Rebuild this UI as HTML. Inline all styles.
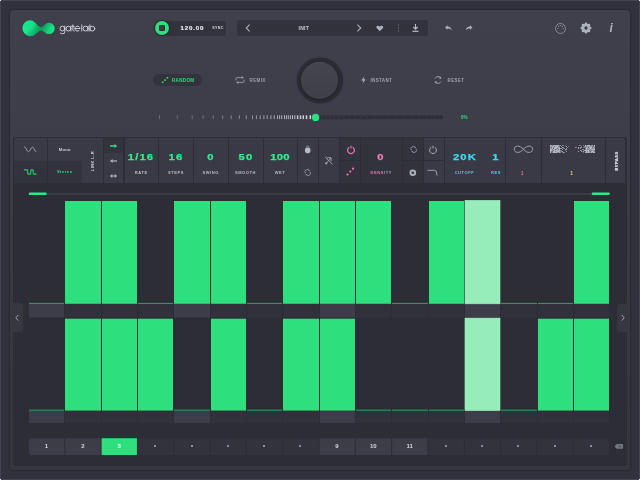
<!DOCTYPE html><html><head><meta charset="utf-8"><style>
*{margin:0;padding:0;box-sizing:border-box}
html,body{width:640px;height:480px;overflow:hidden;will-change:transform;background:#31323c;font-family:"Liberation Sans",sans-serif}
.a{position:absolute}
#panel{left:10px;top:10px;width:620px;height:460px;background:linear-gradient(#3f404c,#3c3d49 30%,#3a3b46 45%,#38383f 62%,#35363e);border-radius:4px;box-shadow:0 0 1px 0.5px rgba(20,20,28,0.3)}
.t{color:#c9cdd5;font-weight:bold;white-space:nowrap}
.cell{position:absolute;background:#393a45}
.dk{background:#32333d}
.lbl{position:absolute;font-size:4px;font-weight:bold;letter-spacing:0.6px;color:#b9bdc6;text-align:center;white-space:nowrap}
.val{position:absolute;font-size:9px;font-weight:bold;color:#31ec8c;-webkit-text-stroke:0.25px currentColor;text-align:center;white-space:nowrap;letter-spacing:0.9px;transform:scaleX(1.25)}
</style></head><body><div id="panel" class="a"></div>
<div class="a" style="left:0;top:0;width:640px;height:1px;background:#43444f"></div>
<div class="a" style="left:0;top:479px;width:640px;height:1px;background:#43444f"></div>
<div class="a" style="left:0;top:0;width:1px;height:480px;background:#43444f"></div>
<div class="a" style="left:639px;top:0;width:1px;height:480px;background:#43444f"></div>
<div class="a" style="left:0px;top:0px;width:1px;height:1px;background:#e8e8ec"></div>
<div class="a" style="left:639px;top:0px;width:1px;height:1px;background:#e8e8ec"></div>
<div class="a" style="left:0px;top:479px;width:1px;height:1px;background:#e8e8ec"></div>
<div class="a" style="left:639px;top:479px;width:1px;height:1px;background:#e8e8ec"></div>
<svg class="a" style="left:0;top:0" width="100" height="50" viewBox="0 0 100 50">
<defs><linearGradient id="lg" x1="22" x2="55" y1="0" y2="0" gradientUnits="userSpaceOnUse"><stop offset="0" stop-color="#18ee90"/><stop offset="0.35" stop-color="#16dc86"/><stop offset="0.52" stop-color="#10b56d"/><stop offset="0.62" stop-color="#0fae69"/><stop offset="0.8" stop-color="#16d480"/><stop offset="1" stop-color="#1ae88b"/></linearGradient>
<linearGradient id="lg2" x1="36" y1="23" x2="45" y2="33" gradientUnits="userSpaceOnUse"><stop offset="0" stop-color="#0a8f55" stop-opacity="0"/><stop offset="0.5" stop-color="#0a8f55" stop-opacity="0.55"/><stop offset="1" stop-color="#0a8f55" stop-opacity="0"/></linearGradient></defs>
<path id="lp" d="M30.4 20.2 A8 8 0 0 0 30.4 36.2 C34.8 36.2 37.6 31 40.6 30.4 C43.6 30.1 45.2 34.1 49 34.1 A5.65 5.65 0 0 0 49 22.8 C45.2 22.8 43.6 27.5 40.6 27.2 C37.6 26.8 34.8 20.2 30.4 20.2Z" fill="url(#lg)"/>
<path d="M30.4 20.2 A8 8 0 0 0 30.4 36.2 C34.8 36.2 37.6 31 40.6 30.4 C43.6 30.1 45.2 34.1 49 34.1 A5.65 5.65 0 0 0 49 22.8 C45.2 22.8 43.6 27.5 40.6 27.2 C37.6 26.8 34.8 20.2 30.4 20.2Z" fill="url(#lg2)"/>
<g stroke="#d3d5db" stroke-width="0.95" fill="none" stroke-linecap="round">
<circle cx="62.4" cy="28.6" r="2.4"/><path d="M64.8 26.2 V31.8 Q64.8 33.8 62.6 33.8 Q61.2 33.8 60.4 33.1"/>
<circle cx="68.45" cy="28.6" r="2.4"/><path d="M70.85 26.2 V31"/>
<path d="M72.9 24.9 V29.9 Q72.9 31 74.1 31 M71.7 26.3 H74.2"/>
<path d="M75 28.6 H79.95 A2.5 2.5 0 1 0 78.9 30.7"/>
<path d="M81.8 24.9 V31"/>
<circle cx="85.6" cy="28.6" r="2.45"/><path d="M88.05 26.2 V31"/>
<path d="M89.85 24.9 V31"/><circle cx="92.3" cy="28.6" r="2.45"/>
</g></svg>
<div class="a" style="left:160px;top:20.5px;width:66px;height:15px;background:#31323c;border-radius:3px"></div>
<div class="a" style="left:154.75px;top:20.85px;width:14.5px;height:14.5px;background:#2ddf7d;border-radius:50%;box-shadow:0 0 1px 1px rgba(30,25,40,0.6)"></div>
<div class="a" style="left:159.1px;top:25.4px;width:5.5px;height:5.7px;background:#3a3f42;border:1px solid #2a2b33;border-radius:1px"></div>
<div class="a t" style="left:180.5px;top:24.3px;font-size:6.1px;letter-spacing:0.85px;color:#e6e8ec;-webkit-text-stroke:0.2px #e6e8ec">120.00</div>
<div class="a t" style="left:212.3px;top:25.6px;font-size:3.6px;letter-spacing:0.35px;color:#d5d8de">SYNC</div>
<div class="a" style="left:236.5px;top:20px;width:191px;height:16px;background:#31323c;border-radius:3px"></div>
<svg class="a" style="left:244px;top:23px" width="8" height="10"><path d="M5.6 1.6 L2.2 5 L5.6 8.4" stroke="#a9adb6" stroke-width="1.1" fill="none"/></svg>
<div class="a t" style="left:298.5px;top:25px;font-size:5px;letter-spacing:0.3px">INIT</div>
<svg class="a" style="left:355px;top:23px" width="8" height="10"><path d="M2.4 1.6 L5.8 5 L2.4 8.4" stroke="#a9adb6" stroke-width="1.1" fill="none"/></svg>
<svg class="a" style="left:375.8px;top:24.6px" width="8" height="7"><g transform="scale(0.84)"><path d="M4.5 7.5 L1 4 C0 3 0.5 0.8 2.3 0.8 C3.3 0.8 4 1.5 4.5 2.2 C5 1.5 5.7 0.8 6.7 0.8 C8.5 0.8 9 3 8 4 Z" fill="#aeb2bb"/></g></svg>
<svg class="a" style="left:397px;top:23px" width="3" height="10"><circle cx="1.5" cy="2" r="0.6" fill="#8a8e98"/><circle cx="1.5" cy="5" r="0.6" fill="#8a8e98"/><circle cx="1.5" cy="8" r="0.6" fill="#8a8e98"/></svg>
<svg class="a" style="left:411px;top:23px" width="9" height="10"><path d="M4.5 1 L4.5 6 M2.3 4 L4.5 6.2 L6.7 4" stroke="#b8bcc5" stroke-width="1.1" fill="none"/><path d="M1.5 8.3 H7.5" stroke="#b8bcc5" stroke-width="1.2"/></svg>
<svg class="a" style="left:443px;top:24px" width="10" height="8"><path d="M2 3.5 L4.5 1.2 V2.6 C7 2.6 8.3 4.2 8.8 6.2 C7.8 5 6.5 4.5 4.5 4.5 V5.8 Z" fill="#aab0ba"/></svg>
<svg class="a" style="left:464px;top:24px" width="10" height="8"><path d="M8.5 3.5 L6 1.2 V2.6 C3.5 2.6 2.2 4.2 1.7 6.2 C2.7 5 4 4.5 6 4.5 V5.8 Z" fill="#aab0ba"/></svg>
<svg class="a" style="left:554px;top:22px" width="13" height="13"><circle cx="6.5" cy="6.5" r="5" stroke="#8d919b" stroke-width="0.9" fill="none"/><circle cx="3.8" cy="6.5" r="0.6" fill="#8d919b"/><circle cx="9.2" cy="6.5" r="0.6" fill="#8d919b"/><circle cx="4.6" cy="4.4" r="0.6" fill="#8d919b"/><circle cx="8.4" cy="4.4" r="0.6" fill="#8d919b"/><circle cx="6.5" cy="3.6" r="0.6" fill="#8d919b"/></svg>
<svg class="a" style="left:580px;top:22px" width="12" height="12"><g fill="#aeb3bc"><circle cx="6" cy="6" r="4.3"/><circle cx="10.20" cy="6.00" r="1.35"/><circle cx="8.97" cy="8.97" r="1.35"/><circle cx="6.00" cy="10.20" r="1.35"/><circle cx="3.03" cy="8.97" r="1.35"/><circle cx="1.80" cy="6.00" r="1.35"/><circle cx="3.03" cy="3.03" r="1.35"/><circle cx="6.00" cy="1.80" r="1.35"/><circle cx="8.97" cy="3.03" r="1.35"/></g><circle cx="6" cy="6" r="1.7" fill="#3e3f4b"/></svg>
<div class="a" style="left:609.5px;top:22.2px;font-size:12px;font-weight:bold;font-style:italic;color:#aeb3bc;line-height:1">i</div>
<div class="a" style="left:152.5px;top:73.5px;width:49px;height:12px;background:#32333d;border-radius:6px"></div>
<svg class="a" style="left:161px;top:76px" width="8" height="8"><rect x="0.8" y="5.5" width="1.6" height="1.6" fill="#2ddf7d"/><rect x="3.2" y="3.3" width="1.6" height="1.6" fill="#2ddf7d"/><rect x="5.6" y="1" width="1.6" height="1.6" fill="#2ddf7d"/></svg>
<div class="a" style="left:172px;top:77.6px;font-size:4.5px;font-weight:bold;color:#2ddf7d;letter-spacing:0.35px">RANDOM</div>
<svg class="a" style="left:234px;top:75px" width="12" height="10"><path d="M2 5.3 V3.6 Q2 2.6 3 2.6 H8.8 M10 4.7 V6.4 Q10 7.4 9 7.4 H3.2" stroke="#9a9ea8" stroke-width="0.9" fill="none"/><path d="M7.8 1.1 L9.9 2.6 L7.8 4.1Z M4.2 5.9 L2.1 7.4 L4.2 8.9Z" fill="#9a9ea8"/></svg>
<div class="a" style="left:249.5px;top:77.6px;font-size:4.5px;font-weight:bold;color:#9a9ea8;letter-spacing:0.4px">REMIX</div>
<div class="a" style="left:296px;top:56.5px;width:47.5px;height:47px;border-radius:50%;background:radial-gradient(circle,#28292f 0,#2a2b33 22px,#2d2e37 22.8px,rgba(61,62,74,0) 23.9px)"></div>
<div class="a" style="left:300.8px;top:61.7px;width:37.7px;height:37.5px;border-radius:50%;background:linear-gradient(#45454f,#3f3f4a);box-shadow:0 0.8px 1.2px rgba(0,0,0,0.35),inset 0 0.7px 0 rgba(255,255,255,0.08)"></div>
<svg class="a" style="left:360px;top:76px" width="7" height="8"><path d="M4.5 0.3 L1.2 4.5 H3.3 L2.4 7.7 L5.8 3.3 H3.6 Z" fill="#a7acb5"/></svg>
<div class="a" style="left:370.5px;top:77.6px;font-size:4.5px;font-weight:bold;color:#9da1aa;letter-spacing:0.35px">INSTANT</div>
<svg class="a" style="left:433px;top:75px" width="10" height="10"><path d="M2 3.5 A3.6 3.6 0 0 1 8 3 M8 6.5 A3.6 3.6 0 0 1 2 7" stroke="#a7acb5" stroke-width="0.9" fill="none"/><path d="M7 1.5 L8.5 3.5 L6.2 3.7Z M3 8.5 L1.5 6.5 L3.8 6.3Z" fill="#a7acb5"/></svg>
<div class="a" style="left:447.5px;top:77.6px;font-size:4.5px;font-weight:bold;color:#9da1aa;letter-spacing:0.4px">RESET</div>
<svg class="a" style="left:0;top:0" width="640" height="480"><rect x="158.90" y="115.3" width="1.0" height="3.8" fill="rgba(215,219,226,0.30)"/><rect x="176.80" y="115.3" width="1.0" height="3.8" fill="rgba(215,219,226,0.31)"/><rect x="191.70" y="115.3" width="1.0" height="3.8" fill="rgba(215,219,226,0.32)"/><rect x="202.60" y="115.3" width="1.0" height="3.8" fill="rgba(215,219,226,0.34)"/><rect x="212.80" y="115.3" width="1.0" height="3.8" fill="rgba(215,219,226,0.37)"/><rect x="222.20" y="115.3" width="1.0" height="3.8" fill="rgba(215,219,226,0.40)"/><rect x="230.75" y="115.3" width="1.0" height="3.8" fill="rgba(215,219,226,0.43)"/><rect x="238.90" y="115.3" width="1.0" height="3.8" fill="rgba(215,219,226,0.47)"/><rect x="245.80" y="115.3" width="1.0" height="3.8" fill="rgba(215,219,226,0.50)"/><rect x="252.00" y="115.3" width="1.0" height="3.8" fill="rgba(215,219,226,0.53)"/><rect x="255.90" y="115.3" width="1.0" height="3.8" fill="rgba(215,219,226,0.56)"/><rect x="259.70" y="115.3" width="1.0" height="3.8" fill="rgba(215,219,226,0.58)"/><rect x="263.40" y="115.3" width="1.0" height="3.8" fill="rgba(215,219,226,0.60)"/><rect x="266.70" y="115.3" width="1.0" height="3.8" fill="rgba(215,219,226,0.62)"/><rect x="270.40" y="115.3" width="1.0" height="3.8" fill="rgba(215,219,226,0.65)"/><rect x="273.70" y="115.3" width="1.0" height="3.8" fill="rgba(215,219,226,0.67)"/><rect x="277.00" y="115.3" width="1.0" height="3.8" fill="rgba(215,219,226,0.69)"/><rect x="279.10" y="115.3" width="1.0" height="3.8" fill="rgba(215,219,226,0.71)"/><rect x="281.20" y="115.3" width="1.0" height="3.8" fill="rgba(215,219,226,0.72)"/><rect x="284.00" y="115.3" width="1.0" height="3.8" fill="rgba(215,219,226,0.75)"/><rect x="285.90" y="115.3" width="1.0" height="3.8" fill="rgba(215,219,226,0.76)"/><rect x="287.80" y="115.3" width="1.0" height="3.8" fill="rgba(215,219,226,0.78)"/><rect x="289.90" y="115.3" width="1.0" height="3.8" fill="rgba(215,219,226,0.79)"/><rect x="292.00" y="115.3" width="1.0" height="3.8" fill="rgba(215,219,226,0.81)"/><rect x="294.30" y="115.3" width="1.0" height="3.8" fill="rgba(215,219,226,0.83)"/><rect x="296.85" y="115.3" width="1.5" height="3.8" fill="rgba(215,219,226,0.86)"/><rect x="299.75" y="115.3" width="1.5" height="3.8" fill="rgba(215,219,226,0.88)"/><rect x="302.55" y="115.3" width="1.5" height="3.8" fill="rgba(215,219,226,0.91)"/><rect x="305.75" y="115.3" width="1.5" height="3.8" fill="rgba(215,219,226,0.94)"/><rect x="309.55" y="115.3" width="1.5" height="3.8" fill="rgba(215,219,226,0.97)"/><rect x="319" y="115.5" width="124" height="3.6" fill="#2d2e37"/><rect x="321.70" y="115.5" width="1" height="3.6" fill="#383944"/><rect x="325.90" y="115.5" width="1" height="3.6" fill="#383944"/><rect x="329.70" y="115.5" width="1" height="3.6" fill="#383944"/><rect x="333.50" y="115.5" width="1" height="3.6" fill="#383944"/><rect x="338.10" y="115.5" width="1" height="3.6" fill="#383944"/><rect x="343.30" y="115.5" width="1" height="3.6" fill="#383944"/><rect x="348.90" y="115.5" width="1" height="3.6" fill="#383944"/><rect x="354.50" y="115.5" width="1" height="3.6" fill="#383944"/><rect x="360.60" y="115.5" width="1" height="3.6" fill="#383944"/><rect x="367.20" y="115.5" width="1" height="3.6" fill="#383944"/><rect x="374.20" y="115.5" width="1" height="3.6" fill="#383944"/><rect x="381.20" y="115.5" width="1" height="3.6" fill="#383944"/><rect x="388.34" y="115.5" width="1" height="3.6" fill="#383944"/><rect x="395.62" y="115.5" width="1" height="3.6" fill="#383944"/><rect x="403.05" y="115.5" width="1" height="3.6" fill="#383944"/><rect x="410.63" y="115.5" width="1" height="3.6" fill="#383944"/><rect x="418.36" y="115.5" width="1" height="3.6" fill="#383944"/><rect x="426.24" y="115.5" width="1" height="3.6" fill="#383944"/><rect x="434.28" y="115.5" width="1" height="3.6" fill="#383944"/><circle cx="315.6" cy="117.4" r="3.7" fill="#2ddf7d"/></svg>
<div class="a" style="left:461px;top:115px;font-size:4.5px;font-weight:bold;color:#2ddf7d">0%</div>
<div class="a" style="left:13px;top:137px;width:614px;height:329px;background:#2c2d35;border-radius:4px"></div>
<div class="cell " style="left:14px;top:138px;width:33px;height:22.5px;border-top-left-radius:3px"></div>
<div class="cell dk" style="left:14px;top:160.5px;width:33px;height:22.5px;"></div>
<div class="cell " style="left:48px;top:138px;width:33.5px;height:22.5px;"></div>
<div class="cell dk" style="left:48px;top:160.5px;width:33.5px;height:22.5px;"></div>
<div class="cell " style="left:82px;top:138px;width:20.5px;height:45px;"></div>
<div class="cell dk" style="left:103.5px;top:138px;width:19.5px;height:14.5px;"></div>
<div class="cell " style="left:103.5px;top:152.5px;width:19.5px;height:30.5px;"></div>
<div class="cell " style="left:124.5px;top:138px;width:33.5px;height:45px;"></div>
<div class="cell " style="left:159px;top:138px;width:34px;height:45px;"></div>
<div class="cell " style="left:194px;top:138px;width:33.5px;height:45px;"></div>
<div class="cell " style="left:228.5px;top:138px;width:34.0px;height:45px;"></div>
<div class="cell " style="left:263.5px;top:138px;width:33.0px;height:45px;"></div>
<div class="cell " style="left:297.5px;top:138px;width:20.0px;height:45px;"></div>
<div class="cell " style="left:318.5px;top:138px;width:20.5px;height:45px;"></div>
<div class="cell dk" style="left:340px;top:138px;width:20px;height:22.0px;"></div>
<div class="cell dk" style="left:340px;top:161.0px;width:20px;height:22.0px;"></div>
<div class="cell dk" style="left:361px;top:138px;width:41px;height:45px;"></div>
<div class="cell dk" style="left:403px;top:138px;width:19.5px;height:22.0px;"></div>
<div class="cell dk" style="left:403px;top:161.0px;width:19.5px;height:22.0px;"></div>
<div class="cell " style="left:423.5px;top:138px;width:20.0px;height:22.0px;"></div>
<div class="cell " style="left:423.5px;top:161.0px;width:20.0px;height:22.0px;"></div>
<div class="cell " style="left:444.5px;top:138px;width:60.5px;height:45px;"></div>
<div class="cell " style="left:506px;top:138px;width:34.5px;height:45px;"></div>
<div class="cell " style="left:541.5px;top:138px;width:63.0px;height:45px;"></div>
<div class="cell " style="left:605.5px;top:138px;width:19.5px;height:45px;border-top-right-radius:3px"></div>
<svg class="a" style="left:23px;top:144px" width="15" height="10"><path d="M1.3 2.6 C3 2.6 3.8 7.7 5.4 7.7 C7 7.7 7.8 3.2 9.5 3.2 C11.1 3.2 11.5 7.6 12.9 7.7" stroke="#a3a7b0" stroke-width="0.9" fill="none" stroke-linecap="round"/></svg>
<svg class="a" style="left:23px;top:167px" width="15" height="10"><path d="M1.3 2.9 H4.2 Q4.8 2.9 4.8 3.5 V6.5 Q4.8 7.1 5.4 7.1 H7.2 Q7.8 7.1 7.8 6.5 V3.5 Q7.8 2.9 8.4 2.9 H9.6 Q10.2 2.9 10.2 3.5 V6.5 Q10.2 7.1 10.8 7.1 H13" stroke="#2ac970" stroke-width="1.1" fill="none" stroke-linecap="round"/></svg>
<div class="a t" style="left:48px;top:146.5px;width:33.5px;text-align:center;font-size:4px;letter-spacing:0.35px;color:#d4d7de">Mono</div>
<div class="a t" style="left:48px;top:168.8px;width:33.5px;text-align:center;font-size:4px;letter-spacing:0.55px;color:#2ddf7d">Stereo</div>
<div class="a t" style="left:92.4px;top:160.9px;font-size:4px;letter-spacing:0.4px;color:#dadde3;transform:translate(-50%,-50%) rotate(-90deg)">LINK L-R</div>
<svg class="a" style="left:108px;top:141.5px" width="11" height="8"><path d="M2 4 H7" stroke="#2ddf7d" stroke-width="1.5"/><path d="M6.3 1.9 L9.3 4 L6.3 6.1Z" fill="#2ddf7d"/></svg>
<svg class="a" style="left:108px;top:156.8px" width="11" height="8"><path d="M4 4 H9" stroke="#a9adb6" stroke-width="1.3"/><path d="M4.7 2 L1.8 4 L4.7 6Z" fill="#a9adb6"/></svg>
<svg class="a" style="left:108px;top:171.8px" width="11" height="8"><path d="M3.8 4 H7.2" stroke="#a9adb6" stroke-width="1.1"/><path d="M4.3 2.1 L1.8 4 L4.3 5.9Z M6.7 2.1 L9.2 4 L6.7 5.9Z" fill="#a9adb6"/></svg>
<div class="val" style="left:121.25px;width:40px;top:152px;">1/16</div>
<div class="lbl" style="left:121.25px;width:40px;top:170px">RATE</div>
<div class="val" style="left:156.0px;width:40px;top:152px;">16</div>
<div class="lbl" style="left:156.0px;width:40px;top:170px">STEPS</div>
<div class="val" style="left:190.75px;width:40px;top:152px;">0</div>
<div class="lbl" style="left:190.75px;width:40px;top:170px">SWING</div>
<div class="val" style="left:225.5px;width:40px;top:152px;">50</div>
<div class="lbl" style="left:225.5px;width:40px;top:170px">SMOOTH</div>
<div class="val" style="left:260.0px;width:40px;top:152px;letter-spacing:0.2px;">100</div>
<div class="lbl" style="left:260.0px;width:40px;top:170px">WET</div>
<svg class="a" style="left:302px;top:143px" width="11" height="11"><path d="M4.3 5.5 V4.3 A1.4 1.4 0 0 1 7.1 4.3 V5.5" stroke="#9ea2ac" stroke-width="0.7" fill="none"/><circle cx="5.7" cy="7.4" r="2.8" fill="#b7bbc4"/></svg>
<svg class="a" style="left:302px;top:166.5px" width="11" height="11"><g transform="translate(5.7 5.5) scale(0.74) translate(-5.7 -5.5)"><path d="M2.6 6.6 A3.2 3.2 0 0 1 7.6 2.6" stroke="#9ea2ac" stroke-width="1.1" fill="none"/><path d="M8.8 4.4 A3.2 3.2 0 0 1 3.8 8.4" stroke="#9ea2ac" stroke-width="1.1" fill="none"/><path d="M7.2 1.5 L9 3 L6.8 3.6Z M4.2 9.5 L2.4 8 L4.6 7.4Z" fill="#9ea2ac"/></g></svg>
<svg class="a" style="left:323px;top:155px" width="12" height="12"><path d="M2.2 2 L9.6 9.4 M3.4 8 L8 3 M4 2.7 H8.1 V6.2" stroke="#a3a8b1" stroke-width="0.9" fill="none"/><circle cx="3.3" cy="8.3" r="1.1" fill="#a3a8b1"/></svg>
<svg class="a" style="left:344.5px;top:143.5px" width="12" height="12"><path d="M4.3 3.2 A3.4 3.4 0 1 0 7.7 3.2" stroke="#ee78b0" stroke-width="1.2" fill="none"/><path d="M6 1.8 V4.6" stroke="#ee78b0" stroke-width="1.1"/></svg>
<svg class="a" style="left:345px;top:166px" width="11" height="11"><circle cx="2.5" cy="8.5" r="1.1" fill="#ee78b0"/><circle cx="5.3" cy="5.5" r="1.1" fill="#ee78b0"/><circle cx="8.1" cy="2.7" r="1.1" fill="#ee78b0"/></svg>
<div class="val" style="left:360.75px;width:40px;top:152px;color:#f07cb3">0</div>
<div class="lbl" style="left:361.25px;width:40px;top:170px;color:#ea78ae">DENSITY</div>
<svg class="a" style="left:407.5px;top:144px" width="11" height="11"><g transform="translate(5.7 5.5) scale(0.74) translate(-5.7 -5.5)"><path d="M2.6 6.6 A3.2 3.2 0 0 1 7.6 2.6" stroke="#9ea2ac" stroke-width="1.1" fill="none"/><path d="M8.8 4.4 A3.2 3.2 0 0 1 3.8 8.4" stroke="#9ea2ac" stroke-width="1.1" fill="none"/><path d="M7.2 1.5 L9 3 L6.8 3.6Z M4.2 9.5 L2.4 8 L4.6 7.4Z" fill="#9ea2ac"/></g></svg>
<svg class="a" style="left:408px;top:168px" width="10" height="10"><circle cx="4.8" cy="4.8" r="3.3" fill="#aeb2bb"/><circle cx="4.8" cy="4.8" r="1.4" fill="#3a3b45"/></svg>
<svg class="a" style="left:427px;top:143.5px" width="12" height="12"><path d="M4.3 3.2 A3.4 3.4 0 1 0 7.7 3.2" stroke="#a8adb6" stroke-width="1" fill="none"/><path d="M6 1.8 V4.4" stroke="#a8adb6" stroke-width="1"/></svg>
<svg class="a" style="left:427px;top:169px" width="12" height="8"><path d="M0.5 1.3 H7.5 Q9 1.3 9.5 3 L10 6.5" stroke="#a8adb6" stroke-width="0.9" fill="none"/></svg>
<div class="val" style="left:444.5px;width:40px;top:152px;color:#3ed9ef">20K</div>
<div class="lbl" style="left:444.5px;width:40px;top:170px;color:#3ed9ef">CUTOFF</div>
<div class="val" style="left:476px;width:40px;top:152px;color:#3ed9ef">1</div>
<div class="lbl" style="left:476px;width:40px;top:170px;color:#3ed9ef">RES</div>
<svg class="a" style="left:512px;top:144px" width="22" height="10"><path d="M11.4 5.25 C9 2.6 7.3 2.1 5.6 2.1 C3.5 2.1 2.2 3.5 2.2 5.25 C2.2 7 3.5 8.4 5.6 8.4 C7.3 8.4 9 7.9 11.4 5.25 C13.8 2.6 15.5 2.1 17.2 2.1 C19.3 2.1 20.6 3.5 20.6 5.25 C20.6 7 19.3 8.4 17.2 8.4 C15.5 8.4 13.8 7.9 11.4 5.25Z" stroke="#a3a7b0" stroke-width="0.95" fill="none"/></svg>
<div class="lbl" style="left:502.5px;width:40px;top:169.5px;color:#ef6d7c;font-size:5px">1</div>
<div class="lbl" style="left:552px;width:40px;top:169.5px;color:#e5d35a;font-size:5px">1</div>
<svg class="a" style="left:0;top:0" width="640" height="480"><rect x="550" y="145" width="1" height="1" fill="#b3b7c0"/><rect x="551" y="145" width="1" height="1" fill="#aaaeb7"/><rect x="552" y="145" width="1" height="1" fill="#7e828c"/><rect x="553" y="145" width="1" height="1" fill="#aaaeb7"/><rect x="554" y="145" width="1" height="1" fill="#b3b7c0"/><rect x="555" y="145" width="1" height="1" fill="#aaaeb7"/><rect x="556" y="145" width="1" height="1" fill="#aaaeb7"/><rect x="557" y="145" width="1" height="1" fill="#b3b7c0"/><rect x="558" y="145" width="1" height="1" fill="#b3b7c0"/><rect x="559" y="145" width="1" height="1" fill="#747882"/><rect x="560" y="145" width="1" height="1" fill="#7d818b"/><rect x="562" y="145" width="1" height="1" fill="#7d818b"/><rect x="563" y="145" width="1" height="1" fill="#7d818b"/><rect x="565" y="145" width="1" height="1" fill="#6f737d"/><rect x="550" y="146" width="1" height="1" fill="#b3b7c0"/><rect x="551" y="146" width="1" height="1" fill="#7e828c"/><rect x="552" y="146" width="1" height="1" fill="#aaaeb7"/><rect x="553" y="146" width="1" height="1" fill="#aaaeb7"/><rect x="554" y="146" width="1" height="1" fill="#8a8e98"/><rect x="555" y="146" width="1" height="1" fill="#aaaeb7"/><rect x="556" y="146" width="1" height="1" fill="#aaaeb7"/><rect x="557" y="146" width="1" height="1" fill="#bbbfc7"/><rect x="558" y="146" width="1" height="1" fill="#7e828c"/><rect x="559" y="146" width="1" height="1" fill="#747882"/><rect x="561" y="146" width="1" height="1" fill="#9a9ea8"/><rect x="566" y="146" width="1" height="1" fill="#9a9ea8"/><rect x="568" y="146" width="1" height="1" fill="#6f737d"/><rect x="550" y="147" width="1" height="1" fill="#8a8e98"/><rect x="551" y="147" width="1" height="1" fill="#7e828c"/><rect x="552" y="147" width="1" height="1" fill="#aaaeb7"/><rect x="553" y="147" width="1" height="1" fill="#7e828c"/><rect x="554" y="147" width="1" height="1" fill="#a4a8b1"/><rect x="555" y="147" width="1" height="1" fill="#bbbfc7"/><rect x="556" y="147" width="1" height="1" fill="#bbbfc7"/><rect x="557" y="147" width="1" height="1" fill="#a4a8b1"/><rect x="558" y="147" width="1" height="1" fill="#a4a8b1"/><rect x="559" y="147" width="1" height="1" fill="#a4a8b1"/><rect x="562" y="147" width="1" height="1" fill="#9a9ea8"/><rect x="563" y="147" width="1" height="1" fill="#7d818b"/><rect x="567" y="147" width="1" height="1" fill="#6f737d"/><rect x="550" y="148" width="1" height="1" fill="#a4a8b1"/><rect x="551" y="148" width="1" height="1" fill="#747882"/><rect x="552" y="148" width="1" height="1" fill="#b3b7c0"/><rect x="553" y="148" width="1" height="1" fill="#5f636d"/><rect x="554" y="148" width="1" height="1" fill="#bbbfc7"/><rect x="555" y="148" width="1" height="1" fill="#bbbfc7"/><rect x="556" y="148" width="1" height="1" fill="#aaaeb7"/><rect x="557" y="148" width="1" height="1" fill="#5f636d"/><rect x="558" y="148" width="1" height="1" fill="#aaaeb7"/><rect x="559" y="148" width="1" height="1" fill="#b3b7c0"/><rect x="560" y="148" width="1" height="1" fill="#9a9ea8"/><rect x="561" y="148" width="1" height="1" fill="#9a9ea8"/><rect x="563" y="148" width="1" height="1" fill="#6f737d"/><rect x="564" y="148" width="1" height="1" fill="#7d818b"/><rect x="566" y="148" width="1" height="1" fill="#9a9ea8"/><rect x="550" y="149" width="1" height="1" fill="#bbbfc7"/><rect x="551" y="149" width="1" height="1" fill="#bbbfc7"/><rect x="552" y="149" width="1" height="1" fill="#8a8e98"/><rect x="553" y="149" width="1" height="1" fill="#aaaeb7"/><rect x="554" y="149" width="1" height="1" fill="#a4a8b1"/><rect x="555" y="149" width="1" height="1" fill="#5f636d"/><rect x="556" y="149" width="1" height="1" fill="#7e828c"/><rect x="557" y="149" width="1" height="1" fill="#b3b7c0"/><rect x="558" y="149" width="1" height="1" fill="#8a8e98"/><rect x="559" y="149" width="1" height="1" fill="#b3b7c0"/><rect x="562" y="149" width="1" height="1" fill="#9a9ea8"/><rect x="565" y="149" width="1" height="1" fill="#8a8e98"/><rect x="566" y="149" width="1" height="1" fill="#8a8e98"/><rect x="550" y="150" width="1" height="1" fill="#b3b7c0"/><rect x="551" y="150" width="1" height="1" fill="#b3b7c0"/><rect x="552" y="150" width="1" height="1" fill="#8a8e98"/><rect x="553" y="150" width="1" height="1" fill="#747882"/><rect x="554" y="150" width="1" height="1" fill="#bbbfc7"/><rect x="555" y="150" width="1" height="1" fill="#aaaeb7"/><rect x="556" y="150" width="1" height="1" fill="#bbbfc7"/><rect x="557" y="150" width="1" height="1" fill="#aaaeb7"/><rect x="558" y="150" width="1" height="1" fill="#aaaeb7"/><rect x="559" y="150" width="1" height="1" fill="#aaaeb7"/><rect x="560" y="150" width="1" height="1" fill="#7d818b"/><rect x="561" y="150" width="1" height="1" fill="#6f737d"/><rect x="565" y="150" width="1" height="1" fill="#6f737d"/><rect x="550" y="151" width="1" height="1" fill="#b3b7c0"/><rect x="551" y="151" width="1" height="1" fill="#747882"/><rect x="552" y="151" width="1" height="1" fill="#5f636d"/><rect x="553" y="151" width="1" height="1" fill="#b3b7c0"/><rect x="554" y="151" width="1" height="1" fill="#b3b7c0"/><rect x="555" y="151" width="1" height="1" fill="#8a8e98"/><rect x="556" y="151" width="1" height="1" fill="#a4a8b1"/><rect x="557" y="151" width="1" height="1" fill="#a4a8b1"/><rect x="558" y="151" width="1" height="1" fill="#bbbfc7"/><rect x="559" y="151" width="1" height="1" fill="#a4a8b1"/><rect x="560" y="151" width="1" height="1" fill="#6f737d"/><rect x="561" y="151" width="1" height="1" fill="#7d818b"/><rect x="562" y="151" width="1" height="1" fill="#9a9ea8"/><rect x="566" y="151" width="1" height="1" fill="#8a8e98"/><rect x="550" y="152" width="1" height="1" fill="#bbbfc7"/><rect x="551" y="152" width="1" height="1" fill="#5f636d"/><rect x="552" y="152" width="1" height="1" fill="#7e828c"/><rect x="553" y="152" width="1" height="1" fill="#aaaeb7"/><rect x="554" y="152" width="1" height="1" fill="#bbbfc7"/><rect x="555" y="152" width="1" height="1" fill="#aaaeb7"/><rect x="556" y="152" width="1" height="1" fill="#bbbfc7"/><rect x="557" y="152" width="1" height="1" fill="#7e828c"/><rect x="558" y="152" width="1" height="1" fill="#7e828c"/><rect x="559" y="152" width="1" height="1" fill="#a4a8b1"/><rect x="560" y="152" width="1" height="1" fill="#7d818b"/><rect x="562" y="152" width="1" height="1" fill="#6f737d"/><rect x="563" y="152" width="1" height="1" fill="#9a9ea8"/><rect x="564" y="152" width="1" height="1" fill="#6f737d"/><rect x="579" y="145" width="1" height="1" fill="#8a8e98"/><rect x="580" y="145" width="1" height="1" fill="#6f737d"/><rect x="583" y="145" width="1" height="1" fill="#7d818b"/><rect x="585" y="145" width="1" height="1" fill="#bbbfc7"/><rect x="586" y="145" width="1" height="1" fill="#747882"/><rect x="587" y="145" width="1" height="1" fill="#aaaeb7"/><rect x="588" y="145" width="1" height="1" fill="#b3b7c0"/><rect x="589" y="145" width="1" height="1" fill="#bbbfc7"/><rect x="590" y="145" width="1" height="1" fill="#7e828c"/><rect x="591" y="145" width="1" height="1" fill="#7e828c"/><rect x="592" y="145" width="1" height="1" fill="#a4a8b1"/><rect x="593" y="145" width="1" height="1" fill="#5f636d"/><rect x="594" y="145" width="1" height="1" fill="#bbbfc7"/><rect x="581" y="146" width="1" height="1" fill="#7d818b"/><rect x="584" y="146" width="1" height="1" fill="#7d818b"/><rect x="585" y="146" width="1" height="1" fill="#b3b7c0"/><rect x="586" y="146" width="1" height="1" fill="#7e828c"/><rect x="587" y="146" width="1" height="1" fill="#a4a8b1"/><rect x="588" y="146" width="1" height="1" fill="#8a8e98"/><rect x="589" y="146" width="1" height="1" fill="#a4a8b1"/><rect x="590" y="146" width="1" height="1" fill="#a4a8b1"/><rect x="591" y="146" width="1" height="1" fill="#a4a8b1"/><rect x="592" y="146" width="1" height="1" fill="#747882"/><rect x="593" y="146" width="1" height="1" fill="#5f636d"/><rect x="594" y="146" width="1" height="1" fill="#a4a8b1"/><rect x="575" y="147" width="1" height="1" fill="#8a8e98"/><rect x="576" y="147" width="1" height="1" fill="#7d818b"/><rect x="578" y="147" width="1" height="1" fill="#9a9ea8"/><rect x="580" y="147" width="1" height="1" fill="#7d818b"/><rect x="581" y="147" width="1" height="1" fill="#8a8e98"/><rect x="583" y="147" width="1" height="1" fill="#6f737d"/><rect x="584" y="147" width="1" height="1" fill="#6f737d"/><rect x="585" y="147" width="1" height="1" fill="#5f636d"/><rect x="586" y="147" width="1" height="1" fill="#a4a8b1"/><rect x="587" y="147" width="1" height="1" fill="#b3b7c0"/><rect x="588" y="147" width="1" height="1" fill="#5f636d"/><rect x="589" y="147" width="1" height="1" fill="#b3b7c0"/><rect x="590" y="147" width="1" height="1" fill="#aaaeb7"/><rect x="591" y="147" width="1" height="1" fill="#aaaeb7"/><rect x="592" y="147" width="1" height="1" fill="#7e828c"/><rect x="593" y="147" width="1" height="1" fill="#aaaeb7"/><rect x="594" y="147" width="1" height="1" fill="#747882"/><rect x="578" y="148" width="1" height="1" fill="#9a9ea8"/><rect x="580" y="148" width="1" height="1" fill="#9a9ea8"/><rect x="585" y="148" width="1" height="1" fill="#8a8e98"/><rect x="586" y="148" width="1" height="1" fill="#bbbfc7"/><rect x="587" y="148" width="1" height="1" fill="#8a8e98"/><rect x="588" y="148" width="1" height="1" fill="#aaaeb7"/><rect x="589" y="148" width="1" height="1" fill="#7e828c"/><rect x="590" y="148" width="1" height="1" fill="#bbbfc7"/><rect x="591" y="148" width="1" height="1" fill="#aaaeb7"/><rect x="592" y="148" width="1" height="1" fill="#7e828c"/><rect x="593" y="148" width="1" height="1" fill="#aaaeb7"/><rect x="594" y="148" width="1" height="1" fill="#7e828c"/><rect x="582" y="149" width="1" height="1" fill="#7d818b"/><rect x="583" y="149" width="1" height="1" fill="#8a8e98"/><rect x="585" y="149" width="1" height="1" fill="#747882"/><rect x="586" y="149" width="1" height="1" fill="#b3b7c0"/><rect x="587" y="149" width="1" height="1" fill="#7e828c"/><rect x="588" y="149" width="1" height="1" fill="#8a8e98"/><rect x="589" y="149" width="1" height="1" fill="#a4a8b1"/><rect x="590" y="149" width="1" height="1" fill="#8a8e98"/><rect x="591" y="149" width="1" height="1" fill="#a4a8b1"/><rect x="592" y="149" width="1" height="1" fill="#aaaeb7"/><rect x="593" y="149" width="1" height="1" fill="#a4a8b1"/><rect x="594" y="149" width="1" height="1" fill="#bbbfc7"/><rect x="580" y="150" width="1" height="1" fill="#9a9ea8"/><rect x="581" y="150" width="1" height="1" fill="#6f737d"/><rect x="583" y="150" width="1" height="1" fill="#6f737d"/><rect x="584" y="150" width="1" height="1" fill="#9a9ea8"/><rect x="585" y="150" width="1" height="1" fill="#bbbfc7"/><rect x="586" y="150" width="1" height="1" fill="#aaaeb7"/><rect x="587" y="150" width="1" height="1" fill="#bbbfc7"/><rect x="588" y="150" width="1" height="1" fill="#bbbfc7"/><rect x="589" y="150" width="1" height="1" fill="#8a8e98"/><rect x="590" y="150" width="1" height="1" fill="#8a8e98"/><rect x="591" y="150" width="1" height="1" fill="#747882"/><rect x="592" y="150" width="1" height="1" fill="#8a8e98"/><rect x="593" y="150" width="1" height="1" fill="#bbbfc7"/><rect x="594" y="150" width="1" height="1" fill="#747882"/><rect x="578" y="151" width="1" height="1" fill="#9a9ea8"/><rect x="581" y="151" width="1" height="1" fill="#8a8e98"/><rect x="582" y="151" width="1" height="1" fill="#6f737d"/><rect x="583" y="151" width="1" height="1" fill="#8a8e98"/><rect x="585" y="151" width="1" height="1" fill="#747882"/><rect x="586" y="151" width="1" height="1" fill="#bbbfc7"/><rect x="587" y="151" width="1" height="1" fill="#8a8e98"/><rect x="588" y="151" width="1" height="1" fill="#b3b7c0"/><rect x="589" y="151" width="1" height="1" fill="#7e828c"/><rect x="590" y="151" width="1" height="1" fill="#747882"/><rect x="591" y="151" width="1" height="1" fill="#aaaeb7"/><rect x="592" y="151" width="1" height="1" fill="#bbbfc7"/><rect x="593" y="151" width="1" height="1" fill="#a4a8b1"/><rect x="594" y="151" width="1" height="1" fill="#7e828c"/><rect x="583" y="152" width="1" height="1" fill="#6f737d"/><rect x="585" y="152" width="1" height="1" fill="#bbbfc7"/><rect x="586" y="152" width="1" height="1" fill="#a4a8b1"/><rect x="587" y="152" width="1" height="1" fill="#a4a8b1"/><rect x="588" y="152" width="1" height="1" fill="#b3b7c0"/><rect x="589" y="152" width="1" height="1" fill="#aaaeb7"/><rect x="590" y="152" width="1" height="1" fill="#747882"/><rect x="591" y="152" width="1" height="1" fill="#b3b7c0"/><rect x="592" y="152" width="1" height="1" fill="#7e828c"/><rect x="593" y="152" width="1" height="1" fill="#b3b7c0"/><rect x="594" y="152" width="1" height="1" fill="#b3b7c0"/></svg>
<div class="a t" style="left:616px;top:160.8px;font-size:4.2px;letter-spacing:0.4px;color:#e6e8ec;-webkit-text-stroke:0.15px #e6e8ec;transform:translate(-50%,-50%) rotate(-90deg)">BYPASS</div>
<svg class="a" style="left:0;top:0" width="640" height="480"><rect x="28.75" y="193" width="581" height="2" fill="#3a3b45"/><rect x="28.75" y="192.5" width="18" height="2.5" rx="1.2" fill="#22ec8a"/><rect x="591.75" y="192.5" width="18" height="2.5" rx="1.2" fill="#22ec8a"/><rect x="29.00" y="304" width="35.00" height="13.6" fill="#3c3d49"/><rect x="29.00" y="411" width="35.00" height="12" fill="#3c3d49"/><rect x="29.00" y="302.90000000000003" width="35.00" height="0.9" fill="#2cb36b"/><rect x="29.00" y="409.70000000000005" width="35.00" height="0.9" fill="#2cb36b"/><rect x="65.00" y="304" width="36.00" height="13.6" fill="#30313a"/><rect x="65.00" y="411" width="36.00" height="12" fill="#30313a"/><rect x="65.00" y="201" width="36.00" height="102.80000000000001" fill="#2ddf7d"/><rect x="65.00" y="318.7" width="36.00" height="91.90000000000003" fill="#2ddf7d"/><rect x="102.00" y="304" width="35.00" height="13.6" fill="#30313a"/><rect x="102.00" y="411" width="35.00" height="12" fill="#30313a"/><rect x="102.00" y="201" width="35.00" height="102.80000000000001" fill="#2ddf7d"/><rect x="102.00" y="318.7" width="35.00" height="91.90000000000003" fill="#2ddf7d"/><rect x="138.00" y="304" width="35.00" height="13.6" fill="#30313a"/><rect x="138.00" y="411" width="35.00" height="12" fill="#30313a"/><rect x="138.00" y="302.90000000000003" width="35.00" height="0.9" fill="#2cb36b"/><rect x="138.00" y="318.7" width="35.00" height="91.90000000000003" fill="#2ddf7d"/><rect x="174.00" y="304" width="36.00" height="13.6" fill="#3c3d49"/><rect x="174.00" y="411" width="36.00" height="12" fill="#3c3d49"/><rect x="174.00" y="201" width="36.00" height="102.80000000000001" fill="#2ddf7d"/><rect x="174.00" y="409.70000000000005" width="36.00" height="0.9" fill="#2cb36b"/><rect x="211.00" y="304" width="35.00" height="13.6" fill="#30313a"/><rect x="211.00" y="411" width="35.00" height="12" fill="#30313a"/><rect x="211.00" y="201" width="35.00" height="102.80000000000001" fill="#2ddf7d"/><rect x="211.00" y="318.7" width="35.00" height="91.90000000000003" fill="#2ddf7d"/><rect x="247.00" y="304" width="35.00" height="13.6" fill="#30313a"/><rect x="247.00" y="411" width="35.00" height="12" fill="#30313a"/><rect x="247.00" y="302.90000000000003" width="35.00" height="0.9" fill="#2cb36b"/><rect x="247.00" y="409.70000000000005" width="35.00" height="0.9" fill="#2cb36b"/><rect x="283.00" y="304" width="36.00" height="13.6" fill="#30313a"/><rect x="283.00" y="411" width="36.00" height="12" fill="#30313a"/><rect x="283.00" y="201" width="36.00" height="102.80000000000001" fill="#2ddf7d"/><rect x="283.00" y="318.7" width="36.00" height="91.90000000000003" fill="#2ddf7d"/><rect x="320.00" y="304" width="35.00" height="13.6" fill="#3c3d49"/><rect x="320.00" y="411" width="35.00" height="12" fill="#3c3d49"/><rect x="320.00" y="201" width="35.00" height="102.80000000000001" fill="#2ddf7d"/><rect x="320.00" y="318.7" width="35.00" height="91.90000000000003" fill="#2ddf7d"/><rect x="356.00" y="304" width="35.00" height="13.6" fill="#30313a"/><rect x="356.00" y="411" width="35.00" height="12" fill="#30313a"/><rect x="356.00" y="201" width="35.00" height="102.80000000000001" fill="#2ddf7d"/><rect x="356.00" y="409.70000000000005" width="35.00" height="0.9" fill="#2cb36b"/><rect x="392.00" y="304" width="36.00" height="13.6" fill="#30313a"/><rect x="392.00" y="411" width="36.00" height="12" fill="#30313a"/><rect x="392.00" y="302.90000000000003" width="36.00" height="0.9" fill="#2cb36b"/><rect x="392.00" y="409.70000000000005" width="36.00" height="0.9" fill="#2cb36b"/><rect x="429.00" y="304" width="35.00" height="13.6" fill="#30313a"/><rect x="429.00" y="411" width="35.00" height="12" fill="#30313a"/><rect x="429.00" y="201" width="35.00" height="102.80000000000001" fill="#2ddf7d"/><rect x="429.00" y="409.70000000000005" width="35.00" height="0.9" fill="#2cb36b"/><rect x="465.00" y="304" width="35.00" height="13.6" fill="#3c3d49"/><rect x="465.00" y="411" width="35.00" height="12" fill="#3c3d49"/><rect x="465.00" y="200.4" width="35.00" height="103.4" fill="#97edba" stroke="#a6f3c6" stroke-width="0.6"/><rect x="465.00" y="318.09999999999997" width="35.00" height="92.50000000000003" fill="#97edba" stroke="#a6f3c6" stroke-width="0.6"/><rect x="501.00" y="304" width="36.00" height="13.6" fill="#30313a"/><rect x="501.00" y="411" width="36.00" height="12" fill="#30313a"/><rect x="501.00" y="302.90000000000003" width="36.00" height="0.9" fill="#2cb36b"/><rect x="501.00" y="409.70000000000005" width="36.00" height="0.9" fill="#2cb36b"/><rect x="538.00" y="304" width="35.00" height="13.6" fill="#30313a"/><rect x="538.00" y="411" width="35.00" height="12" fill="#30313a"/><rect x="538.00" y="302.90000000000003" width="35.00" height="0.9" fill="#2cb36b"/><rect x="538.00" y="318.7" width="35.00" height="91.90000000000003" fill="#2ddf7d"/><rect x="574.00" y="304" width="35.00" height="13.6" fill="#30313a"/><rect x="574.00" y="411" width="35.00" height="12" fill="#30313a"/><rect x="574.00" y="201" width="35.00" height="102.80000000000001" fill="#2ddf7d"/><rect x="574.00" y="318.7" width="35.00" height="91.90000000000003" fill="#2ddf7d"/><path d="M32.00 438.25 H64.31 V455 H32.00 Q29.00 455 29.00 452 V441.25 Q29.00 438.25 32.00 438.25Z" fill="#3c3d49"/><rect x="65.31" y="438.25" width="35.31" height="16.75" fill="#3c3d49"/><rect x="101.62" y="438.25" width="35.31" height="16.75" fill="#2ddf7d"/><rect x="137.94" y="438.25" width="35.31" height="16.75" fill="#32333d"/><rect x="174.25" y="438.25" width="35.31" height="16.75" fill="#32333d"/><rect x="210.56" y="438.25" width="35.31" height="16.75" fill="#32333d"/><rect x="246.88" y="438.25" width="35.31" height="16.75" fill="#32333d"/><rect x="283.19" y="438.25" width="35.31" height="16.75" fill="#32333d"/><rect x="319.50" y="438.25" width="35.31" height="16.75" fill="#3c3d49"/><rect x="355.81" y="438.25" width="35.31" height="16.75" fill="#3c3d49"/><rect x="392.12" y="438.25" width="35.31" height="16.75" fill="#3c3d49"/><rect x="428.44" y="438.25" width="35.31" height="16.75" fill="#32333d"/><rect x="464.75" y="438.25" width="35.31" height="16.75" fill="#32333d"/><rect x="501.06" y="438.25" width="35.31" height="16.75" fill="#32333d"/><rect x="537.38" y="438.25" width="35.31" height="16.75" fill="#32333d"/><path d="M573.69 438.25 H606.00 Q609.00 438.25 609.00 441.25 V452 Q609.00 455 606.00 455 H573.69Z" fill="#32333d"/></svg>
<div class="a t" style="left:31.51px;width:30px;text-align:center;top:443px;font-size:6px;color:#d8dbe1">1</div>
<div class="a t" style="left:67.82px;width:30px;text-align:center;top:443px;font-size:6px;color:#d8dbe1">2</div>
<div class="a t" style="left:104.13px;width:30px;text-align:center;top:443px;font-size:6px;color:#ffffff">3</div>
<svg class="a" style="left:153.24px;top:444.2px" width="4" height="4"><circle cx="2" cy="2" r="1" fill="#abafb8"/></svg>
<svg class="a" style="left:189.56px;top:444.2px" width="4" height="4"><circle cx="2" cy="2" r="1" fill="#abafb8"/></svg>
<svg class="a" style="left:225.87px;top:444.2px" width="4" height="4"><circle cx="2" cy="2" r="1" fill="#abafb8"/></svg>
<svg class="a" style="left:262.18px;top:444.2px" width="4" height="4"><circle cx="2" cy="2" r="1" fill="#abafb8"/></svg>
<svg class="a" style="left:298.49px;top:444.2px" width="4" height="4"><circle cx="2" cy="2" r="1" fill="#abafb8"/></svg>
<div class="a t" style="left:322.01px;width:30px;text-align:center;top:443px;font-size:6px;color:#d8dbe1">9</div>
<div class="a t" style="left:358.32px;width:30px;text-align:center;top:443px;font-size:6px;color:#d8dbe1">10</div>
<div class="a t" style="left:394.63px;width:30px;text-align:center;top:443px;font-size:6px;color:#d8dbe1">11</div>
<svg class="a" style="left:443.74px;top:444.2px" width="4" height="4"><circle cx="2" cy="2" r="1" fill="#abafb8"/></svg>
<svg class="a" style="left:480.06px;top:444.2px" width="4" height="4"><circle cx="2" cy="2" r="1" fill="#abafb8"/></svg>
<svg class="a" style="left:516.37px;top:444.2px" width="4" height="4"><circle cx="2" cy="2" r="1" fill="#abafb8"/></svg>
<svg class="a" style="left:552.68px;top:444.2px" width="4" height="4"><circle cx="2" cy="2" r="1" fill="#abafb8"/></svg>
<svg class="a" style="left:588.99px;top:444.2px" width="4" height="4"><circle cx="2" cy="2" r="1" fill="#abafb8"/></svg>
<svg class="a" style="left:614px;top:443.3px" width="10" height="7"><path d="M2.6 1 H9 V5.8 H2.6 L0.7 3.4Z" fill="#72767f"/><path d="M5.2 2.7 L6.7 4.2 M6.7 2.7 L5.2 4.2" stroke="#3a3b45" stroke-width="0.9"/></svg>
<div class="a" style="left:13px;top:303px;width:9.5px;height:28.5px;background:#363741;border-radius:0 3px 3px 0"></div>
<svg class="a" style="left:14px;top:313.5px" width="6" height="8"><path d="M4.4 1 L1.8 3.8 L4.4 6.6" stroke="#a0a4ad" stroke-width="1" fill="none"/></svg>
<div class="a" style="left:617.4px;top:303.5px;width:9.6px;height:28.2px;background:#363741;border-radius:3px 0 0 3px"></div>
<svg class="a" style="left:619.5px;top:313.5px" width="6" height="8"><path d="M1.6 1 L4.2 3.8 L1.6 6.6" stroke="#a0a4ad" stroke-width="1" fill="none"/></svg></body></html>
